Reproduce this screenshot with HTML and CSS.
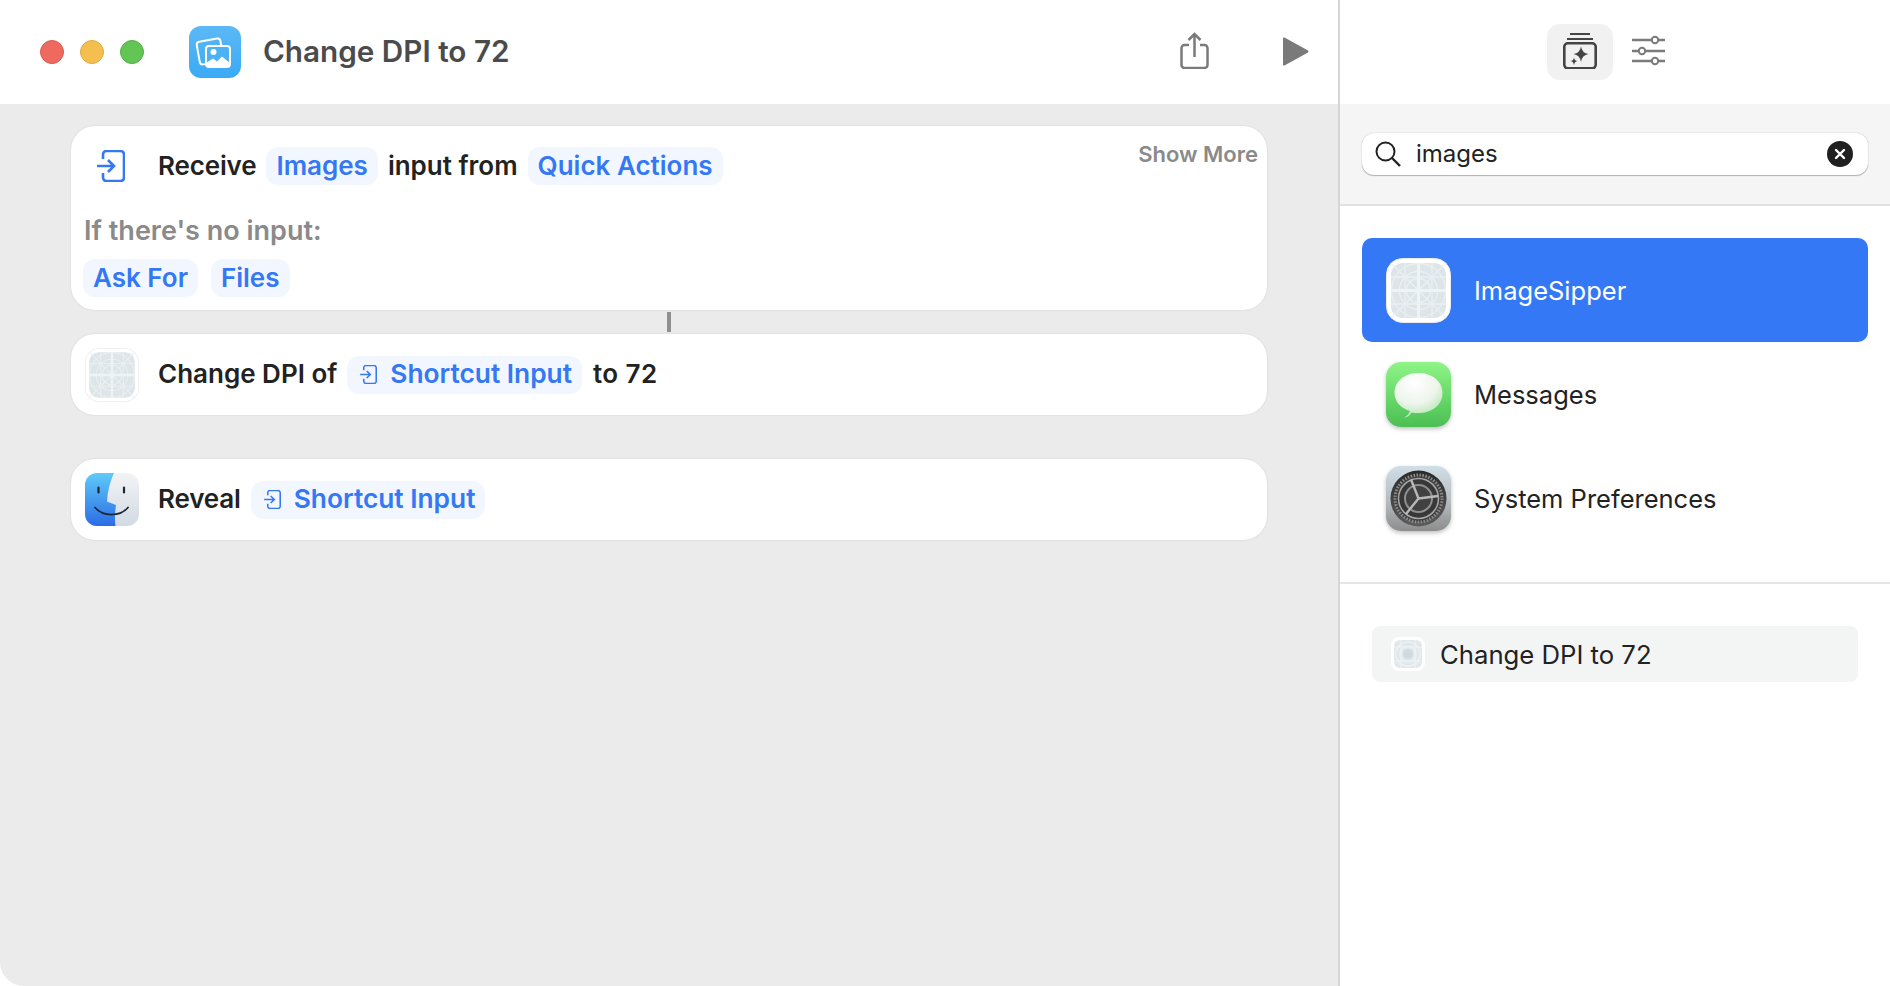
FILE: index.html
```html
<!DOCTYPE html>
<html lang="en">
<head>
<meta charset="utf-8">
<title>Change DPI to 72</title>
<link rel="stylesheet" href="styles.css">
</head>
<body>
<svg class="sprite" width="0" height="0" aria-hidden="true">
  <defs>
    <symbol id="input" viewBox="0 0 28 32">
      <path d="M6 9V4.5A3.5 3.5 0 0 1 9.500 1H23.500A3.500 3.500 0 0 1 27 4.500V27.500A3.500 3.500 0 0 1 23.500 31H9.500A3.500 3.500 0 0 1 6 27.500V23" fill="none" stroke="currentColor" stroke-width="2.600"/>
      <path d="M0 16H17M11 10L17 16L11 22" fill="none" stroke="currentColor" stroke-width="2.600"/>
    </symbol>
    <symbol id="grid" viewBox="0 0 65 65">
      <rect x=".5" y=".5" width="64" height="64" rx="16" fill="#fff" stroke="#ececec"/>
      <rect x="5" y="5" width="55" height="55" rx="12" fill="#dde5e8"/>
      <g fill="none" stroke="#eaf0f2" stroke-width="1.300">
        <path d="M5 5L60 60M60 5L5 60"/>
        <circle cx="32.500" cy="32.500" r="12"/>
        <circle cx="32.500" cy="32.500" r="19"/>
        <circle cx="32.500" cy="32.500" r="27"/>
        <path d="M19 5V60M46 5V60M5 19H60M5 46H60"/>
      </g>
      <path d="M32.500 5V60M5 32.500H60" stroke="#eef3f4" stroke-width="3"/>
    </symbol>
    <linearGradient id="msgBg" x1="0" y1="0" x2="0" y2="1"><stop offset="0" stop-color="#8ef586"/><stop offset="1" stop-color="#4bbf53"/></linearGradient>
    <radialGradient id="msgBubble" cx=".42" cy=".22" r=".85"><stop offset="0" stop-color="#fff"/><stop offset=".55" stop-color="#eef5ec"/><stop offset="1" stop-color="#a9e4a8"/></radialGradient>
    <linearGradient id="prefBg" x1="0" y1="0" x2="0" y2="1"><stop offset="0" stop-color="#d0dee6"/><stop offset=".55" stop-color="#b5bcc0"/><stop offset="1" stop-color="#8c8c8c"/></linearGradient>
    <linearGradient id="prefDial" x1="0" y1="0" x2="0" y2="1"><stop offset="0" stop-color="#2a2a2a"/><stop offset="1" stop-color="#5c5c5c"/></linearGradient>
    <linearGradient id="finderL" x1="0" y1="0" x2="0" y2="1"><stop offset="0" stop-color="#5fcbf8"/><stop offset="1" stop-color="#2c6ce6"/></linearGradient>
    <linearGradient id="finderR" x1="0" y1="0" x2="0" y2="1"><stop offset="0" stop-color="#f2f3f5"/><stop offset="1" stop-color="#d3dae3"/></linearGradient>
    <linearGradient id="appBg" x1="0" y1="0" x2="0" y2="1"><stop offset="0" stop-color="#5cb8f6"/><stop offset="1" stop-color="#3aaaf5"/></linearGradient>
    <clipPath id="finderClip"><rect width="54" height="53" rx="12"/></clipPath>
  </defs>
</svg>

<div class="window">
  <main class="editor">
    <header class="editor-bar">
      <div class="lights">
        <span class="light light-red"></span>
        <span class="light light-yellow"></span>
        <span class="light light-green"></span>
      </div>
      <svg class="app-icon" viewBox="0 0 52 52">
        <rect width="52" height="52" rx="12" fill="url(#appBg)"/>
        <rect x="9" y="14" width="24" height="23" rx="3" transform="rotate(-10 21 25)" fill="none" stroke="#fff" stroke-width="2"/>
        <rect x="17" y="20" width="24" height="21" rx="3" fill="#4db1f6" stroke="#fff" stroke-width="2"/>
        <circle cx="24.500" cy="26" r="3" fill="#fff"/>
        <path d="M17 41V37L24 32.500L28 35.500L33 30.500L41 37V41Z" fill="#fff"/>
      </svg>
      <h1 class="title">Change DPI to 72</h1>
      <div class="bar-actions">
        <svg class="share-icon" viewBox="0 0 29 37">
          <path d="M9 13H4.500A3 3 0 0 0 1.500 16V33A3 3 0 0 0 4.500 36H24.500A3 3 0 0 0 27.500 33V16A3 3 0 0 0 24.500 13H20" fill="none" stroke="#7b7b7b" stroke-width="2.500"/>
          <path d="M14.500 25V2M8.500 8L14.500 2L20.500 8" fill="none" stroke="#7b7b7b" stroke-width="2.500"/>
        </svg>
        <svg class="play-icon" viewBox="0 0 26 29">
          <path d="M1.500 .6L25 13.400Q26 14.500 25 15.600L1.500 28.400Q0 29 0 27.500V1.500Q0 0 1.500 .6Z" fill="#7a7a7a"/>
        </svg>
      </div>
    </header>

    <div class="canvas">
      <section class="card card-receive">
        <div class="card-row">
          <span class="slot"><svg class="input-large"><use href="#input"/></svg></span>
          <div class="action">
            <span class="word word-tight">Receive</span>
            <span class="pill">Images</span>
            <span class="word">input from</span>
            <span class="pill">Quick Actions</span>
          </div>
          <span class="show-more">Show More</span>
        </div>
        <p class="fallback-label">If there's no input:</p>
        <div class="fallback-pills">
          <span class="pill">Ask For</span>
          <span class="pill">Files</span>
        </div>
      </section>
      <div class="connector"></div>
      <section class="card card-line">
        <svg class="slot-icon"><use href="#grid"/></svg>
        <div class="action">
          <span class="word">Change DPI of</span>
          <span class="pill pill-var"><svg class="input-small"><use href="#input"/></svg>Shortcut Input</span>
          <span class="word word-end">to 72</span>
        </div>
      </section>
      <section class="card card-line card-reveal">
        <svg class="slot-icon" viewBox="0 0 54 54">
          <g clip-path="url(#finderClip)">
            <rect width="54" height="53" fill="url(#finderR)"/>
            <path d="M0 0H29C25 9 22.500 18 22 28.500L31 32C30 39 29.500 46 30.500 53H0Z" fill="url(#finderL)"/>
          </g>
          <path d="M13.500 14.500V19.500M39 14.500V19.500" stroke="#1d2735" stroke-width="2.200" stroke-linecap="round"/>
          <path d="M10 34.500C18 44 35 44 43 34.500" fill="none" stroke="#1d2735" stroke-width="1.800" stroke-linecap="round"/>
        </svg>
        <div class="action">
          <span class="word word-tight">Reveal</span>
          <span class="pill pill-var"><svg class="input-small"><use href="#input"/></svg>Shortcut Input</span>
        </div>
      </section>
    </div>
  </main>

  <aside class="sidebar">
    <header class="side-bar">
      <button class="tool tool-active" type="button">
        <svg class="library-icon" viewBox="0 0 34 36">
          <path d="M7 1H27M4 6H30" stroke="#444" stroke-width="2" fill="none"/>
          <rect x="1.300" y="10.300" width="31.400" height="25" rx="3.500" fill="none" stroke="#444" stroke-width="2.600"/>
          <path d="M18 13.500Q19 20 25.500 21Q19 22 18 29Q17 22 10.500 21Q17 20 18 13.500Z" fill="#444"/>
          <path d="M11 24.500Q11.400 27.600 14.500 28Q11.400 28.400 11 32.500Q10.600 28.400 7.500 28Q10.600 27.600 11 24.500Z" fill="#444"/>
        </svg>
      </button>
      <svg class="sliders-icon" viewBox="0 0 33 24">
        <g stroke="#7b7b7b" stroke-width="2.600" fill="none">
          <path d="M0 2H33M0 13H33M0 23H33"/>
          <circle cx="23" cy="2" r="3.200" fill="#fff" stroke-width="2"/>
          <circle cx="10" cy="13" r="3.200" fill="#fff" stroke-width="2"/>
          <circle cx="23" cy="23" r="3.200" fill="#fff" stroke-width="2"/>
        </g>
      </svg>
    </header>

    <div class="search-area">
      <div class="search">
        <svg class="search-icon" viewBox="0 0 26 26">
          <circle cx="10.500" cy="10.500" r="9" fill="none" stroke="#222" stroke-width="2"/>
          <path d="M17 17L25 25" stroke="#222" stroke-width="2.400"/>
        </svg>
        <span class="search-text">images</span>
        <svg class="clear-icon" viewBox="0 0 26 26">
          <circle cx="13" cy="13" r="13" fill="#202020"/>
          <path d="M9 9L17 17M17 9L9 17" stroke="#fff" stroke-width="2.400" stroke-linecap="round"/>
        </svg>
      </div>
    </div>

    <ul class="app-list">
      <li class="app-row app-row-selected">
        <svg class="list-icon"><use href="#grid"/></svg>
        <span>ImageSipper</span>
      </li>
      <li class="app-row">
        <svg class="list-icon list-icon-shadow" viewBox="0 0 65 65">
          <rect width="65" height="65" rx="15" fill="url(#msgBg)"/>
          <path d="M18 55.500C21 54 23 52 24 49C14 46 8.500 39 8.500 31C8.500 19 19 11 32.500 11C46 11 56.500 19 56.500 31C56.500 43 46 51 32.500 51C30 51 27.500 51 25.500 50.500C24 53.500 21 55.500 18 55.500Z" fill="url(#msgBubble)"/>
        </svg>
        <span>Messages</span>
      </li>
      <li class="app-row">
        <svg class="list-icon list-icon-shadow" viewBox="0 0 65 65">
          <rect width="65" height="65" rx="15" fill="url(#prefBg)"/>
          <circle cx="32.500" cy="32.500" r="28" fill="url(#prefDial)"/>
          <circle cx="32.500" cy="32.500" r="23.500" fill="#3f3f3f" stroke="#8d8d8d" stroke-width="3" stroke-dasharray="1.500 1.500"/>
          <circle cx="32.500" cy="32.500" r="20" fill="#383838" stroke="#a8a8a8" stroke-width="1.500"/>
          <circle cx="32.500" cy="32.500" r="13.500" fill="#414141" stroke="#8f8f8f" stroke-width="2"/>
          <path d="M32.500 32.500L25 13.500M32.500 32.500L52 30M32.500 32.500L20 48" stroke="#b8b8b8" stroke-width="2.400" fill="none"/>
        </svg>
        <span>System Preferences</span>
      </li>
    </ul>

    <div class="shortcut-area">
      <div class="shortcut">
        <svg class="shortcut-icon" viewBox="0 0 34 34">
          <rect width="34" height="34" rx="8" fill="#fff"/>
          <rect x="3" y="3" width="28" height="28" rx="6" fill="#e0e8eb"/>
          <circle cx="17" cy="17" r="5" fill="#cfdbe0"/>
          <g fill="none" stroke="#eef3f4" stroke-width="1.200">
            <circle cx="17" cy="17" r="8"/>
            <circle cx="17" cy="17" r="12"/>
            <path d="M10 3V31M24 3V31M3 10H31M3 24H31"/>
          </g>
        </svg>
        <span>Change DPI to 72</span>
      </div>
    </div>
  </aside>
</div>
</body>
</html>
```
FILE: styles.css
```css
* { box-sizing: border-box; }
html, body { margin: 0; height: 100%; background: #fff; }
body { font-family: Inter, "Noto Sans", "Liberation Sans", sans-serif; color: #222; overflow: hidden; }
.sprite { position: absolute; }
.window { display: flex; height: 986px; width: 1890px; }

.editor { width: 1340px; display: flex; flex-direction: column; border-right: 2px solid #d6d6d6; }
.editor-bar { height: 104px; flex: none; display: flex; align-items: center; padding: 0 29px 0 40px; }
.lights { display: flex; gap: 16px; }
.light { width: 24px; height: 24px; border-radius: 50%; }
.light-red { background: #ee6a5f; border: 1px solid #d9594f; }
.light-yellow { background: #f5bf4f; border: 1px solid #dfa93f; }
.light-green { background: #62c554; border: 1px solid #52ad47; }
.app-icon { width: 52px; height: 52px; margin-left: 45px; }
.title { margin: 0 0 2px 22px; font-size: 29.700px; font-weight: 600; color: #4b4b4b; letter-spacing: 0; }
.bar-actions { margin-left: auto; display: flex; align-items: center; gap: 74px; }
.share-icon { width: 29px; height: 37px; margin-bottom: 4px; }
.play-icon { width: 26px; height: 29px; margin-bottom: 2px; }

.canvas { flex: 1; background: #ebebeb; padding: 22px 71px 0; border-bottom-left-radius: 24px; display: flex; flex-direction: column; }
.card { width: 1196px; background: #fff; border-radius: 24px; box-shadow: 0 0 2px rgba(0, 0, 0, .12); flex: none; }
.card-receive { height: 184px; padding: 21px 9px 0 13px; }
.card-row { display: flex; align-items: center; gap: 20px; }
.slot { width: 54px; display: flex; justify-content: center; }
.input-large { width: 28px; height: 32px; color: #3478f6; }
.action { display: flex; align-items: center; gap: 10px; font-size: 26px; font-weight: 600; }
.word { white-space: nowrap; color: #222; padding-bottom: 2px; }
.word-tight { letter-spacing: -.15px; }
.word-end { margin-left: 1px; letter-spacing: .4px; }
.pill { height: 38px; padding: 0 10px 2px; border-radius: 12px; background: #f2f6fe; color: #3478f6; display: inline-flex; align-items: center; white-space: nowrap; font-size: 26px; font-weight: 600; }
.pill-var { padding: 0 10px 2px 13px; font-size: 26.300px; }
.input-small { width: 17px; height: 19px; margin: 2px 13px 0 0; color: #3478f6; }
.show-more { margin-left: auto; align-self: flex-start; font-size: 22px; font-weight: 600; color: #8a8a8a; margin-top: -6px; }
.fallback-label { margin: 31px 0 0; height: 30px; line-height: 30px; font-size: 27px; font-weight: 600; color: #8a8a8a; }
.fallback-pills { display: flex; gap: 13px; margin: 13px 0 0 -1px; }
.connector { width: 4px; height: 20px; margin: 2px 0 2px 596px; background: #8f8f8f; flex: none; }
.card-line { height: 81px; display: flex; align-items: center; gap: 19px; padding-left: 14px; }
.card-reveal { margin-top: 44px; }
.slot-icon { width: 54px; height: 54px; flex: none; }

.sidebar { flex: 1; display: flex; flex-direction: column; }
.side-bar { height: 104px; display: flex; align-items: center; gap: 19px; padding-left: 207px; flex: none; }
.tool { width: 66px; height: 56px; padding: 0; border: 0; border-radius: 13px; display: flex; align-items: center; justify-content: center; background: transparent; }
.tool-active { background: #f1f1f1; }
.library-icon { width: 34px; height: 36px; margin-bottom: 2px; }
.sliders-icon { width: 33px; height: 24px; margin-bottom: 4px; overflow: visible; }
.search-area { height: 102px; background: #f5f5f5; border-bottom: 2px solid #e2e2e2; padding: 29px 22px 0 22px; flex: none; }
.search { height: 42px; background: #fff; border-radius: 12px; box-shadow: 0 0 1px rgba(0, 0, 0, .35), 0 1px 1px rgba(0, 0, 0, .25); display: flex; align-items: center; padding: 0 15px 0 13px; }
.search-icon { width: 26px; height: 26px; margin-right: 15px; }
.search-text { font-size: 24px; color: #222; padding-bottom: 2px; }
.clear-icon { width: 26px; height: 26px; margin-left: auto; }

.app-list { list-style: none; margin: 0; padding: 32px 22px; border-bottom: 2px solid #e6e6e6; flex: none; }
.app-row { height: 104px; display: flex; align-items: center; gap: 23px; padding-left: 24px; font-size: 25.500px; border-radius: 10px; color: #222; }
.app-row-selected { background: #3478f6; color: #fff; }
.list-icon { width: 65px; height: 65px; flex: none; }
.list-icon-shadow { filter: drop-shadow(0 2px 2px rgba(0, 0, 0, .25)); }
.shortcut-area { padding: 42px 32px 0; }
.shortcut { height: 56px; background: #f3f5f5; border-radius: 8px; display: flex; align-items: center; gap: 15px; padding-left: 19px; font-size: 25.700px; color: #222; }
.shortcut-icon { width: 34px; height: 34px; flex: none; }
```
